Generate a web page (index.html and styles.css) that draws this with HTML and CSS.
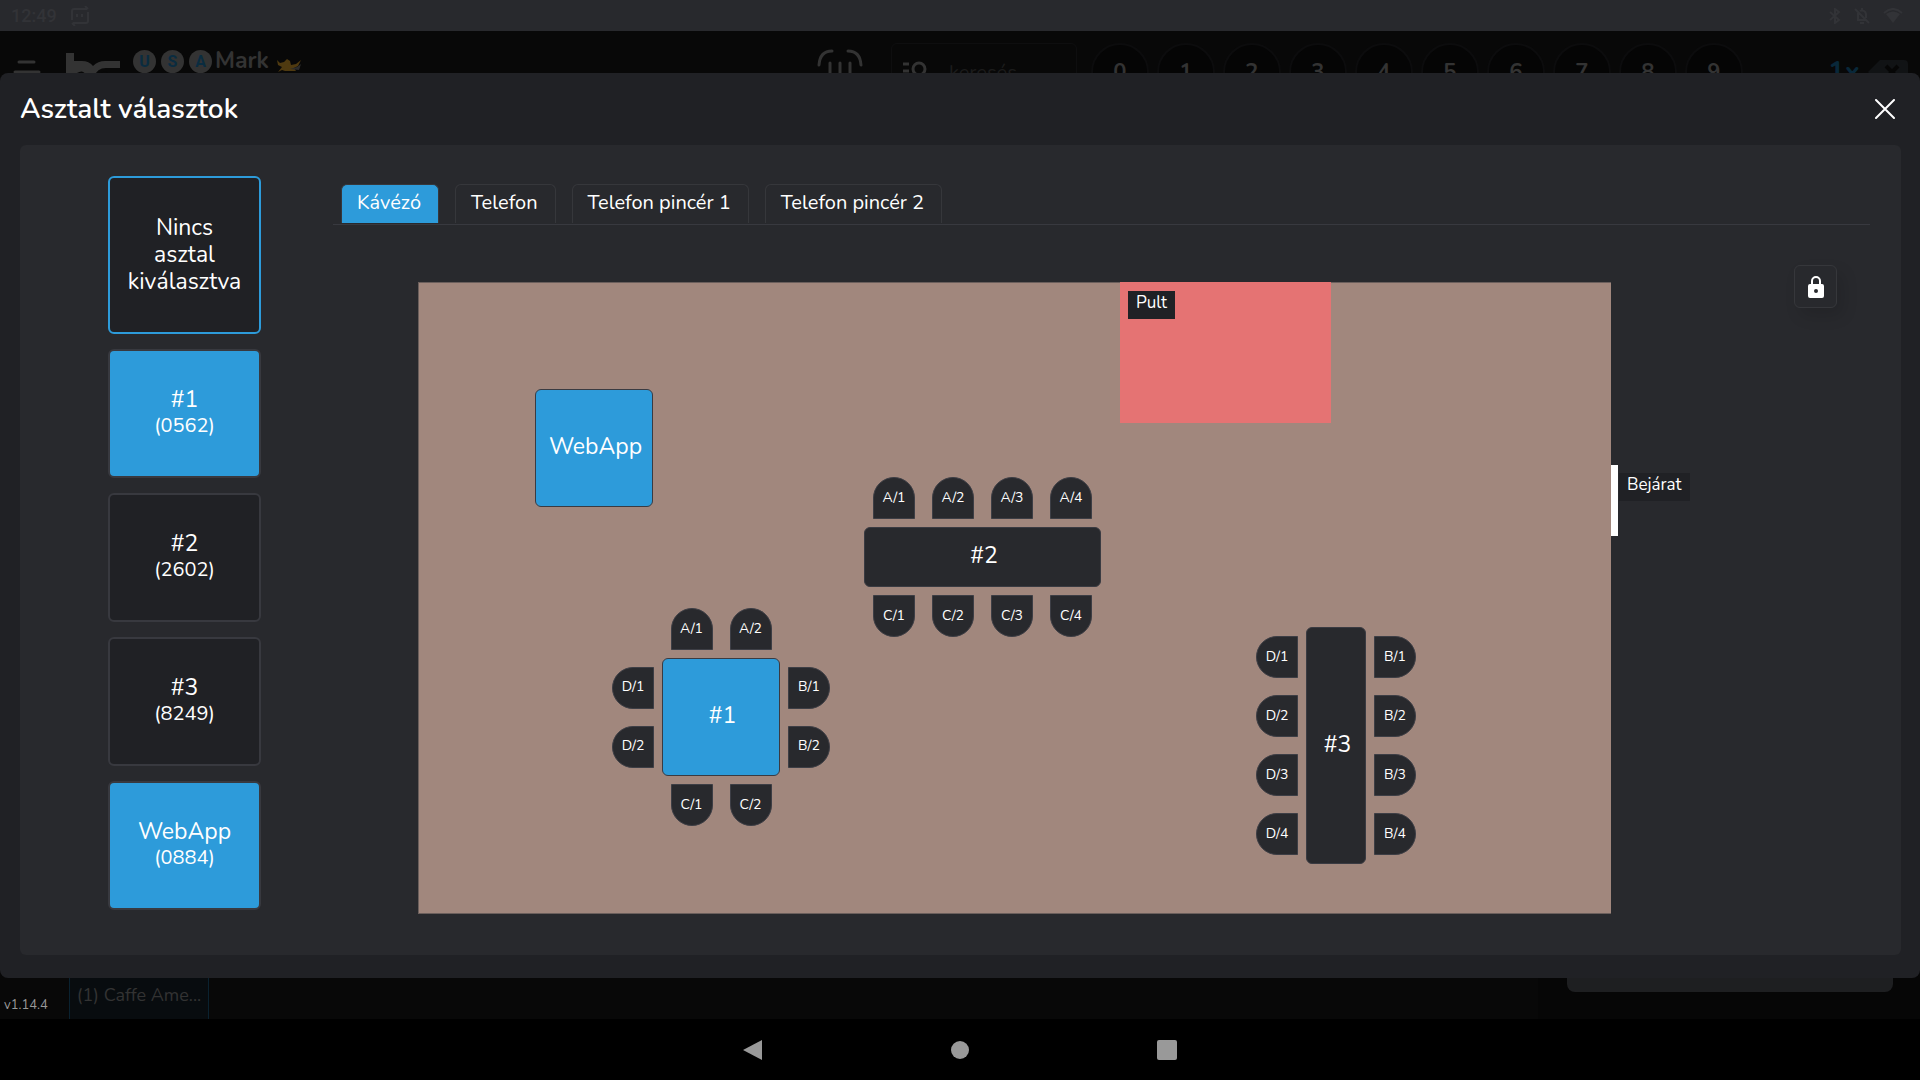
FILE: index.html
```html
<!DOCTYPE html>
<html lang="hu">
<head>
<meta charset="utf-8">
<meta name="viewport" content="width=device-width, initial-scale=1">
<title>Asztalt választok</title>
<link rel="stylesheet" href="styles.css">
</head>
<body>
<div class="status-bar">
  <span class="clock">12:49</span>
  <svg width="18" height="20" viewBox="0 0 18 20" fill="none" stroke="currentColor" stroke-width="2"><path d="M1 14V5a2 2 0 0 1 2-2h13M17 6v9a2 2 0 0 1-2 2H2M14 0l3 3M4 20l-3-3"/><path d="M6 8v3M11 8v3"/></svg>
  <div class="status-icons">
    <svg width="12" height="16" viewBox="0 0 12 16" fill="none" stroke="currentColor" stroke-width="2"><path d="M1 4l9 8-4 3V1l4 3-9 8"/></svg>
    <svg width="16" height="16" viewBox="0 0 16 16" fill="none" stroke="currentColor" stroke-width="2"><path d="M1 1l14 14M4 5v7h8M6 3a4 4 0 0 1 6 3v4M6 15h4M8 0v2"/></svg>
    <svg width="20" height="16" viewBox="0 0 20 16"><path d="M1 5Q10-3 19 5" fill="none" stroke="currentColor" stroke-width="2"/><path d="M3 6q7-5 14 0l-7 9z" fill="currentColor"/></svg>
  </div>
</div>

<div class="app">
  <div class="backdrop">
    <header class="topbar">
      <svg class="menu-icon" width="28" height="24" viewBox="0 0 28 24" stroke="currentColor" stroke-width="3" stroke-linecap="round"><path d="M6 2h15M2 12h24M6 22h15"/></svg>
      <svg class="logo" width="54" height="40" viewBox="0 0 54 40"><path d="M0 1h8v8h8q7 0 11 5 5-5 12-5h15v7H40q-9 0-12 9v10H0z" fill="currentColor"/><path d="M11 21q6-4 9 2v8h-9zM35 21q4-3 7 0l-5 6z" fill="#080808"/></svg>
      <div class="brand">
        <span class="coin">U</span><span class="coin">S</span><span class="coin">A</span>
        <span class="brand-name">Mark</span>
        <svg class="brand-art" width="25" height="13" viewBox="0 0 25 13"><path d="M0 1l3 3 4-1 3-3 3 2 1 4 5-1 5-4-3 6-4 2 2 3H8l-3-1-4 2 4-5-4-2z" fill="#4f3a10"/><path d="M13 10l7-2 4-3-2 6z" fill="#2c2c2c"/></svg>
      </div>
      <svg class="scan-icon" width="40" height="40" viewBox="0 0 48 48" fill="none" stroke="currentColor" stroke-width="3" stroke-linecap="round"><path d="M3 17Q4 3 16 3M32 3q12 0 13 14M14 15v22M24 15v22M34 15v22"/></svg>
      <label class="search">
        <svg width="24" height="24" viewBox="0 0 24 24" fill="none" stroke="currentColor" stroke-width="3"><path d="M0 4h6M0 11h6M0 19h14"/><circle cx="16" cy="9" r="6"/><path d="M20 14l4 5"/></svg>
        <input type="text" placeholder="keresés" aria-label="keresés">
      </label>
      <div class="keys">
        <button>0</button><button>1</button><button>2</button><button>3</button><button>4</button><button>5</button><button>6</button><button>7</button><button>8</button><button>9</button>
      </div>
      <span class="multiplier">1x</span>
      <svg class="backspace" width="40" height="24" viewBox="0 0 40 24"><path d="M12 0h24q4 0 4 4v16q0 4-4 4H12L0 12z" fill="#111315"/><path d="M18 6l12 12M30 6L18 18" stroke="#060606" stroke-width="4"/></svg>
    </header>
    <footer class="orderbar">
      <span class="version">v1.14.4</span>
      <button class="order-item">(1) Caffe Ame...</button>
      <div class="checkout"><div class="checkout-box"></div></div>
    </footer>
  </div>

  <section class="modal" role="dialog" aria-labelledby="title">
    <div class="modal-head">
      <h1 id="title">Asztalt választok</h1>
      <button class="close" aria-label="Bezárás"><svg width="20" height="20" viewBox="0 0 20 20" stroke="currentColor" stroke-width="2" stroke-linecap="round"><path d="M1 1l18 18M19 1L1 19"/></svg></button>
    </div>
    <div class="panel">
      <nav class="table-list">
        <button class="card selected">Nincs asztal kiválasztva</button>
        <button class="card busy">#1<small>(0562)</small></button>
        <button class="card">#2<small>(2602)</small></button>
        <button class="card">#3<small>(8249)</small></button>
        <button class="card busy">WebApp<small>(0884)</small></button>
      </nav>
      <div class="room">
        <div class="tabs" role="tablist">
          <button class="tab active" role="tab" aria-selected="true">Kávézó</button>
          <button class="tab" role="tab">Telefon</button>
          <button class="tab" role="tab">Telefon pincér 1</button>
          <button class="tab" role="tab">Telefon pincér 2</button>
        </div>
        <div class="stage">
          <div class="map">
            <div class="counter"><span class="tag">Pult</span></div>
            <div class="door"></div><span class="tag door-tag">Bejárat</span>
            <button class="table busy webapp">WebApp</button>
            <div class="group group-1">
              <div class="row top"><button class="chair">A/1</button><button class="chair">A/2</button></div>
              <div class="col left"><button class="chair">D/1</button><button class="chair">D/2</button></div>
              <button class="table busy">#1</button>
              <div class="col right"><button class="chair">B/1</button><button class="chair">B/2</button></div>
              <div class="row bottom"><button class="chair">C/1</button><button class="chair">C/2</button></div>
            </div>
            <div class="group group-2">
              <div class="row top"><button class="chair">A/1</button><button class="chair">A/2</button><button class="chair">A/3</button><button class="chair">A/4</button></div>
              <button class="table">#2</button>
              <div class="row bottom"><button class="chair">C/1</button><button class="chair">C/2</button><button class="chair">C/3</button><button class="chair">C/4</button></div>
            </div>
            <div class="group group-3">
              <div class="col left"><button class="chair">D/1</button><button class="chair">D/2</button><button class="chair">D/3</button><button class="chair">D/4</button></div>
              <button class="table">#3</button>
              <div class="col right"><button class="chair">B/1</button><button class="chair">B/2</button><button class="chair">B/3</button><button class="chair">B/4</button></div>
            </div>
          </div>
          <div class="tools">
            <button class="lock" aria-label="Zárolás"><svg width="18" height="22" viewBox="0 0 18 22"><path d="M5 9V5a4 4 0 0 1 8 0v4" fill="none" stroke="currentColor" stroke-width="2"/><path fill="currentColor" fill-rule="evenodd" d="M3 8h12q2 0 2 2v10q0 2-2 2H3q-2 0-2-2V10q0-2 2-2zm6 5a2 2 0 1 0 0 4 2 2 0 0 0 0-4z"/></svg></button>
          </div>
        </div>
      </div>
    </div>
  </section>
</div>

<div class="nav-bar">
  <button aria-label="Vissza"><svg width="20" height="20" viewBox="0 0 20 20"><path d="M19 0v20L0 10z" fill="currentColor"/></svg></button>
  <button aria-label="Kezdőlap"><svg width="20" height="20" viewBox="0 0 20 20"><circle cx="10" cy="10" r="9" fill="currentColor"/></svg></button>
  <button aria-label="Áttekintés"><svg width="20" height="20" viewBox="0 0 20 20"><rect width="20" height="20" rx="2" fill="currentColor"/></svg></button>
</div>
</body>
</html>
```
FILE: styles.css
```css
:root {
  --blue: #2d9bda;
  --panel: #28292d;
  --dark: #202125;
  --line: #38393f;
}
* { box-sizing: border-box; }
body {
  margin: 0;
  min-height: 100vh;
  display: flex;
  flex-direction: column;
  background: #000;
  color: #fff;
  font-family: Nunito, Lato, sans-serif;
  font-size: 20px;
}
button, input { font: inherit; color: inherit; background: none; border: 0; padding: 0; margin: 0; }
svg { display: block; flex: none; }

/* device bars */
.status-bar {
  height: 31px;
  padding: 0 17px 0 11px;
  display: flex;
  align-items: center;
  gap: 14px;
  background: var(--panel);
  color: #323337;
}
.clock { font: 500 18px/24px Roboto, sans-serif; }
.status-icons { display: flex; gap: 13px; margin-left: auto; }
.nav-bar {
  height: 61px;
  display: flex;
  justify-content: center;
  align-items: center;
  gap: 187px;
  color: #999;
}

/* point of sale screen behind the dialog */
.app { flex: 1; display: grid; background: #080808; }
.backdrop, .modal { grid-area: 1 / 1; min-width: 0; }
.backdrop {
  display: flex;
  flex-direction: column;
  justify-content: space-between;
  color: #333;
}
.topbar {
  height: 70px;
  padding: 12px 12px 0 13px;
  display: flex;
  align-items: center;
}
.menu-icon { margin-right: 25px; }
.logo { margin-right: 13px; }
.brand { display: flex; align-items: center; gap: 3px; align-self: flex-start; padding-top: 4px; }
.coin {
  width: 23px;
  height: 23px;
  border-radius: 50%;
  background: #333;
  color: #0a2c40;
  font: bold 16px/23px "Roboto", sans-serif;
  text-align: center;
}
.coin + .coin { margin-left: 2px; }
.brand-name { font-size: 23px; line-height: 28px; font-weight: 700; }
.brand-art { margin: 9px 0 0 5px; }
.scan-icon { width: 48px; height: 48px; margin-left: auto; }
.search {
  width: 186px;
  height: 58px;
  margin-left: 27px;
  padding-left: 11px;
  display: flex;
  align-items: center;
  gap: 22px;
  border: 1px solid #0e0e0f;
  border-radius: 6px;
}
.search input { width: 100px; }
.search input::placeholder { color: #1c1c1c; opacity: 1; }
.keys { display: flex; gap: 8px; margin: 0 85px 0 14px; }
.keys button {
  width: 58px;
  height: 58px;
  border: 2px solid #0c0c0d;
  border-radius: 50%;
  background: #050505;
  font-weight: bold;
  font-size: 22px;
}
.multiplier { color: #09283a; font-weight: bold; font-size: 28px; margin-right: 8px; }
.orderbar { display: flex; align-items: stretch; height: 100px; }
.version { width: 69px; padding: 0 0 4px 4px; align-self: flex-end; font-size: 13px; line-height: 20px; color: #999; }
.order-item {
  width: 140px;
  padding-top: 52px;
  border: solid #0a2230;
  border-width: 0 1px;
  background: #080c0f;
  font-size: 18px;
  white-space: nowrap;
}
.checkout { width: 382px; margin-left: auto; padding: 0 27px 27px 29px; background: #060606; }
.checkout-box { height: 100%; border-radius: 0 0 8px 8px; background: #1e1f21; }

/* dialog */
.modal {
  margin: 42px 0 41px;
  padding: 0 19px 23px 20px;
  display: flex;
  flex-direction: column;
  border-radius: 8px;
  background: var(--dark);
}
.modal-head { height: 72px; padding-right: 6px; display: flex; align-items: center; justify-content: space-between; }
h1 { margin: 0; font-size: 28px; line-height: 36px; font-weight: 600; }
.panel { flex: 1; display: flex; padding: 31px 31px 41px 88px; border-radius: 6px; background: var(--panel); }

.table-list { width: 153px; margin-right: 72px; display: flex; flex-direction: column; gap: 15px; }
.card {
  height: 129px;
  padding: 0 16px 2px;
  border: 2px solid var(--line);
  border-radius: 6px;
  background: var(--dark);
  font-size: 23px;
  line-height: 27px;
}
.card small { display: block; font-size: 20px; line-height: 26px; }
.card.selected { height: 158px; border-color: var(--blue); }
.card.busy, .table.busy { background: var(--blue); }

.room { flex: 1; display: flex; flex-direction: column; }
.tabs { display: flex; gap: 16px; padding: 8px 8px 1px; border-bottom: 1px solid var(--line); }
.tab {
  height: 39px;
  padding: 0 17px 4px 15px;
  border: 1px solid #36373b;
  border-bottom: 0;
  border-radius: 6px 6px 0 0;
}
.tab.active { background: var(--blue); }
.stage { flex: 1; display: flex; padding: 40px 33px 0 85px; }
.map {
  position: relative;
  flex: 1;
  margin-top: 17px;
  border: solid #6b5f5c;
  border-width: 1px 0 1px 1px;
  background: #a1877d;
}
.tools { width: 226px; display: flex; justify-content: flex-end; align-items: flex-start; }
.lock {
  width: 43px;
  height: 43px;
  display: grid;
  place-items: center;
  border: 1px solid #36373b;
  border-radius: 6px;
  box-shadow: 6px 8px 16px rgba(0, 0, 0, .12);
}

/* floor plan objects */
.counter { position: absolute; left: 701px; top: -1px; width: 211px; height: 141px; padding: 9px 8px; background: #e57373; }
.tag { display: block; width: fit-content; height: 28px; padding: 0 8px; background: var(--dark); font-size: 17px; line-height: 23px; }
.door { position: absolute; right: -7px; top: 182px; width: 7px; height: 71px; background: #fff; }
.door-tag { position: absolute; left: calc(100% + 8px); top: 190px; }
.table {
  padding: 0 0 3px 3px;
  border: 1px solid #3a3b42;
  border-radius: 6px;
  background: var(--panel);
  font-size: 23px;
}
.webapp { position: absolute; left: 116px; top: 106px; width: 118px; height: 118px; }
.group { position: absolute; display: grid; gap: 8px; }
.group-1 { left: 193px; top: 325px; grid-template: 42px 118px 42px / 42px 118px 42px; }
.group-2 { left: 445px; top: 194px; grid-template: 42px 60px 42px / 237px; }
.group-3 { left: 837px; top: 344px; grid-template: 237px / 42px 60px 42px; }
.row, .col { display: flex; justify-content: center; gap: 17px; }
.col { flex-direction: column; }
.group-1 .row { grid-column: 1 / -1; }
.chair {
  flex: none;
  width: 42px;
  height: 42px;
  padding-bottom: 2px;
  border: 1px solid #3d3e45;
  background: var(--panel);
  font-size: 14px;
}
.top .chair { border-radius: 21px 21px 0 0; }
.bottom .chair { border-radius: 0 0 21px 21px; }
.left .chair { border-radius: 21px 0 0 21px; }
.right .chair { border-radius: 0 21px 21px 0; }
```
